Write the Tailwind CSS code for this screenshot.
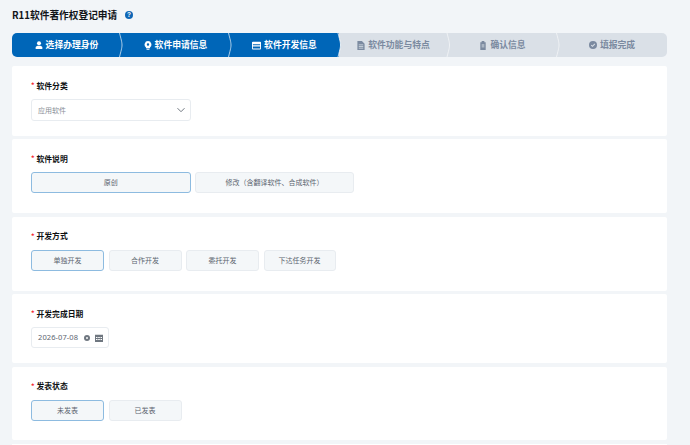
<!DOCTYPE html>
<html lang="zh-CN">
<head>
  <meta charset="UTF-8" />
  <title>R11软件著作权登记申请</title>
  <script src="https://cdn.jsdelivr.net/npm/@tailwindcss/browser@4"></script>
</head>
<body class="bg-[#f2f5f8] h-[445px] overflow-hidden font-['Noto_Sans_CJK_SC','Noto_Sans',sans-serif]">
  <div class="w-[655px] ml-3">
    <!-- title -->
    <div class="h-[33px] pb-[3px] flex items-center gap-[8px]">
      <h1 class="text-[9.7px] leading-4 font-bold text-[#111418]">R11软件著作权登记申请</h1>
      <svg width="8" height="8" viewBox="0 0 8 8"><circle cx="4" cy="4" r="4" fill="#0f66b5"/><text x="4" y="6.400" text-anchor="middle" font-size="6.500" font-weight="700" fill="#fff" font-family="Liberation Sans">?</text></svg>
    </div>

    <!-- steps -->
    <div class="h-6 flex rounded-[5px] overflow-hidden text-[8.8px] font-bold relative">
      <div class="w-[109px] bg-[#0066b8] text-white flex items-center justify-center gap-[3px]">
        <svg width="8" height="8" viewBox="0 0 10 10" fill="#fff"><circle cx="5" cy="2.800" r="2.500"/><path d="M.8 10V8.200C.8 6.600 2.400 6 5 6s4.200.6 4.200 2.200V10z"/></svg>
        <span>选择办理身份</span>
      </div>
      <div class="w-[109px] bg-[#0066b8] text-white flex items-center justify-center gap-[3px]">
        <svg width="8" height="9" viewBox="0 0 10 11" fill="#fff"><path fill-rule="evenodd" d="M5 0a4.300 4.300 0 0 0-2.600 7.700V9h5.200V7.700A4.300 4.300 0 0 0 5 0zm0 2.800a1.500 1.500 0 1 1 0 3 1.500 1.500 0 0 1 0-3z"/><rect x="3.200" y="9.600" width="3.600" height="1.200"/></svg>
        <span>软件申请信息</span>
      </div>
      <div class="w-[109px] bg-[#0066b8] text-white flex items-center justify-center gap-[3px]">
        <svg width="9" height="9" viewBox="0 0 10 10" fill="#fff"><path fill-rule="evenodd" d="M1 .8h8a1 1 0 0 1 1 1v6.600a1 1 0 0 1-1 1H1a1 1 0 0 1-1-1V1.800a1 1 0 0 1 1-1zM1 3.600v1.200h8V3.600zM1 6v2.400h8V6z"/></svg>
        <span>软件开发信息</span>
      </div>
      <div class="w-[109px] bg-[#dae0e7] text-[#7b8aa0] flex items-center justify-center gap-[3px]">
        <svg width="8" height="9" viewBox="0 0 8 10" fill="#7b8aa0"><path fill-rule="evenodd" d="M0 0h5l3 3v7H0zM1.500 4v.8h5V4zm0 1.800v.8h5v-.8zm0 1.800v.8h5v-.8z"/></svg>
        <span>软件功能与特点</span>
      </div>
      <div class="w-[109px] bg-[#dae0e7] text-[#7b8aa0] flex items-center justify-center gap-[3px]">
        <svg width="8" height="9" viewBox="0 0 8 10" fill="#7b8aa0"><path fill-rule="evenodd" d="M2.500 0h3v1.500H7V10H1V1.500h1.500zM2.500 4v.9h3V4zm0 2v.9h3V6z"/></svg>
        <span>确认信息</span>
      </div>
      <div class="flex-1 bg-[#dae0e7] text-[#7b8aa0] flex items-center justify-center gap-[3px]">
        <svg width="8" height="8" viewBox="0 0 10 10"><circle cx="5" cy="5" r="5" fill="#7b8aa0"/><path d="M2.800 5.100 4.400 6.700 7.300 3.600" fill="none" stroke="#dae0e7" stroke-width="1.300"/></svg>
        <span>填报完成</span>
      </div>
      <!-- chevrons between the steps -->
      <svg class="absolute left-0 top-0" width="655" height="24" fill="none" stroke="#fff" stroke-width=".8">
        <path d="M107.500 0C109 6 110 9 110 12S109 18 107.500 24" stroke-opacity=".85"/>
        <path d="M216.500 0C218 6 219 9 219 12S218 18 216.500 24" stroke-opacity=".85"/>
        <path d="M326 0C327.500 6 328.500 9 328.500 12S327.500 18 326 24" fill="#0066b8"/>
        <path d="M435 0C436.500 6 437.500 9 437.500 12S436.500 18 435 24" stroke-opacity=".7"/>
        <path d="M544.500 0C546 6 547 9 547 12S546 18 544.500 24" stroke-opacity=".7"/>
      </svg>
    </div>

    <!-- form cards -->
    <div class="mt-[9px] flex flex-col gap-[3.500px]">
      <div class="h-[69.500px] bg-white rounded-[2px] pl-[19px] pt-[14px]">
        <label class="flex items-center h-[11px] text-[7.800px] font-bold text-[#0d0f12]"><span class="w-[5.500px] text-[7px] text-[#f5222d]">*</span>软件分类</label>
        <div class="mt-[8px] w-[160px] h-[22px] border border-[#e8ecf0] rounded-[3px] flex items-center justify-between pl-[6px] pr-[4px] text-[7px] text-[#8a8f97]">
          <span>应用软件</span>
          <svg width="10" height="10" viewBox="0 0 10 10" fill="none" stroke="#6f7780" stroke-width="1"><path d="M1.500 3.200 5 6.700 8.500 3.200"/></svg>
        </div>
      </div>

      <div class="h-[74px] bg-white rounded-[2px] pl-[19px] pt-[14px]">
        <label class="flex items-center h-[11px] text-[7.800px] font-bold text-[#0d0f12]"><span class="w-[5.500px] text-[7px] text-[#f5222d]">*</span>软件说明</label>
        <div class="mt-[8px] flex gap-[4.500px] text-[7px]">
          <button class="w-[159.500px] h-[21px] bg-[#f4f7f9] border border-[#8dbbe0] rounded-[3px] text-[#5c6570]">原创</button>
          <button class="w-[159px] h-[21px] bg-[#f4f7f9] border border-[#e8ecf0] rounded-[3px] text-[#5c6570]">修改（含翻译软件、合成软件）</button>
        </div>
      </div>

      <div class="h-[74px] bg-white rounded-[2px] pl-[19px] pt-[14px]">
        <label class="flex items-center h-[11px] text-[7.800px] font-bold text-[#0d0f12]"><span class="w-[5.500px] text-[7px] text-[#f5222d]">*</span>开发方式</label>
        <div class="mt-[8px] flex gap-[4.500px] text-[7px]">
          <button class="w-[73px] h-[21px] bg-[#f4f7f9] border border-[#8dbbe0] rounded-[3px] text-[#5c6570]">单独开发</button>
          <button class="w-[73px] h-[21px] bg-[#f4f7f9] border border-[#e8ecf0] rounded-[3px] text-[#5c6570]">合作开发</button>
          <button class="w-[73px] h-[21px] bg-[#f4f7f9] border border-[#e8ecf0] rounded-[3px] text-[#5c6570]">委托开发</button>
          <button class="w-[72px] h-[21px] bg-[#f4f7f9] border border-[#e8ecf0] rounded-[3px] text-[#5c6570]">下达任务开发</button>
        </div>
      </div>

      <div class="h-[69px] bg-white rounded-[2px] pl-[19px] pt-[14px]">
        <label class="flex items-center h-[11px] text-[7.800px] font-bold text-[#0d0f12]"><span class="w-[5.500px] text-[7px] text-[#f5222d]">*</span>开发完成日期</label>
        <div class="mt-[8px] w-[78px] h-[21px] border border-[#e8ecf0] rounded-[3px] flex items-center pl-[6px] text-[#5c6570]">
          <span class="text-[7.500px] whitespace-nowrap tracking-[.1px] font-['Noto_Sans']">2026-07-08</span>
          <svg class="ml-[6px]" width="6" height="6" viewBox="0 0 6 6"><circle cx="3" cy="3" r="3" fill="#6f7780"/><path d="M2 2l2 2M4 2 2 4" stroke="#fff" stroke-width=".7"/></svg>
          <svg class="ml-[5px]" width="8" height="8" viewBox="0 0 8 8" fill="#6f7780"><path fill-rule="evenodd" d="M0 .8h8V8H0zM1 3v1h1.500V3zm2.200 0v1h1.600V3zm2.300 0v1H7V3zM1 5v1h1.500V5zm2.200 0v1h1.600V5zm2.300 0v1H7V5z"/></svg>
        </div>
      </div>

      <div class="h-[73.500px] bg-white rounded-[2px] pl-[19px] pt-[14px]">
        <label class="flex items-center h-[11px] text-[7.800px] font-bold text-[#0d0f12]"><span class="w-[5.500px] text-[7px] text-[#f5222d]">*</span>发表状态</label>
        <div class="mt-[8px] flex gap-[4.500px] text-[7px]">
          <button class="w-[73px] h-[21px] bg-[#f4f7f9] border border-[#8dbbe0] rounded-[3px] text-[#5c6570]">未发表</button>
          <button class="w-[73px] h-[21px] bg-[#f4f7f9] border border-[#e8ecf0] rounded-[3px] text-[#5c6570]">已发表</button>
        </div>
      </div>

      <div class="h-[1.500px] bg-white"></div>
    </div>
  </div>
</body>
</html>
